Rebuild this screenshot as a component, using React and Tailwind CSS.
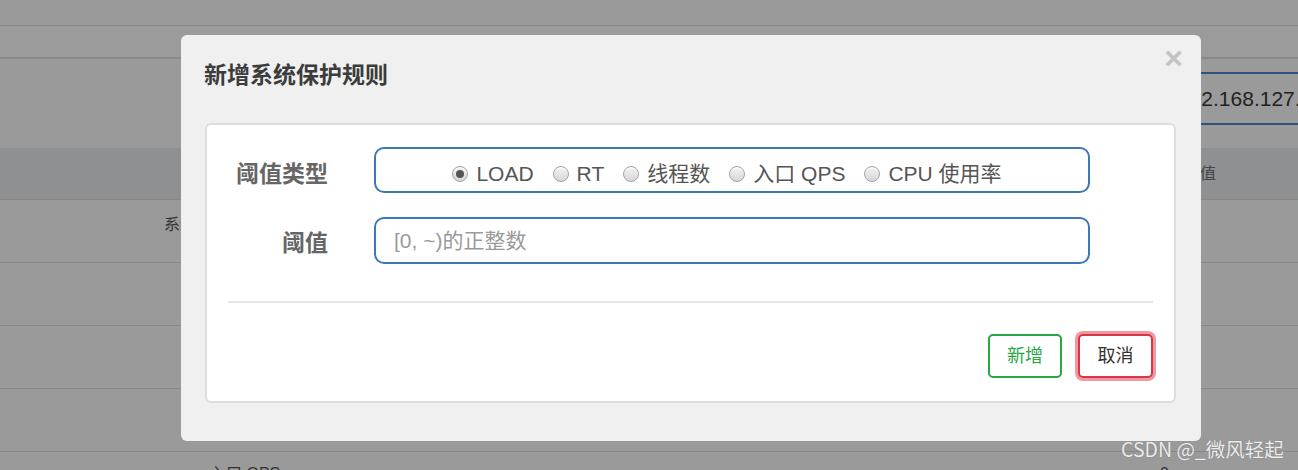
import React from "react";

const FONT = { fontFamily: '"Liberation Sans", "Noto Sans CJK SC", sans-serif' };

function Radio({ checked, label }) {
  return (
    <label className="flex items-center">
      <span className="relative w-[16px] h-[16px] rounded-full border border-[#a3a3a3] bg-linear-to-b from-[#f4f4f4] to-[#d6d6d6] flex items-center justify-center shadow-[inset_0_1px_1px_rgba(255,255,255,0.8)]">
        {checked && <span className="w-[8px] h-[8px] rounded-full bg-[#555555]" />}
      </span>
      <span className="ml-[8px] text-[21px] leading-[24px] text-[#555555]">{label}</span>
    </label>
  );
}

export default function App() {
  return (
    <div className="relative w-full h-[470px] overflow-hidden bg-[#9a9a9a]" style={FONT}>
      {/* background page (dimmed) */}
      <div className="h-[26px] border-b border-[#8a8a8a]" />
      <div className="h-[33px] border-b-2 border-[#898989] bg-[#9b9b9b]" />
      <div className="h-[89px] pt-[13px] pl-[1165px]">
        <div className="w-[400px] h-[53px] border-y-2 border-l-2 border-[#2f5479] rounded-l-[6px] flex items-center pl-[11px] text-[21px] text-[#222222]">
          192.168.127.1
        </div>
      </div>
      <div className="h-[52px] bg-[#8f9092] border-b border-[#888888] flex items-center pl-[1184px] text-[16px] text-[#444444]">
        阈值
      </div>
      <div className="h-[63px] border-b border-[#888888] pt-[15px] pl-[164px] text-[16px] leading-[20px] text-[#333333]">
        系统负载
      </div>
      <div className="h-[63px] border-b border-[#888888]" />
      <div className="h-[63px] border-b border-[#888888]" />
      <div className="h-[63px] border-b border-[#888888]" />
      <div className="flex pt-[12px] text-[16px] leading-[20px] text-[#333333]">
        <span className="w-[1160px] pl-[210px]">入口 QPS</span>
        <span>0</span>
      </div>

      {/* modal */}
      <div className="absolute left-[181px] top-[35px] w-[1020px] h-[406px] bg-[#f0f0f0] rounded-[6px]">
        <span className="absolute right-[18px] top-[3px] text-[32px] leading-[40px] font-bold text-[#c4c4c4]">×</span>
        <div className="h-[88px] pl-[23px] pt-[25px]">
          <h2 className="text-[23px] leading-[30px] font-bold text-[#3c3c3c]">新增系统保护规则</h2>
        </div>
        <div className="ml-[24px] w-[971px] h-[280px] bg-white border-2 border-[#dddddd] rounded-[6px] px-[21px] pt-[22px]">
          <div className="flex items-center h-[46px]">
            <div className="w-[100px] text-right text-[23px] font-bold text-[#666666] pt-[8px]">阈值类型</div>
            <div className="ml-[46px] w-[716px] h-[46px] border-2 border-[#3d78b6] rounded-[10px] flex items-center justify-center gap-[19px] pt-[8px] pr-[10px]">
              <Radio checked label="LOAD" />
              <Radio label="RT" />
              <Radio label="线程数" />
              <Radio label="入口 QPS" />
              <Radio label="CPU 使用率" />
            </div>
          </div>
          <div className="flex items-center h-[47px] mt-[24px]">
            <div className="w-[100px] text-right text-[23px] font-bold text-[#666666] pt-[6px]">阈值</div>
            <div className="ml-[46px] w-[716px] h-[47px] border-2 border-[#3d78b6] rounded-[10px] flex items-center pl-[18px] text-[21px] text-[#9a9a9a]">
              [0, ~)的正整数
            </div>
          </div>
          <div className="mt-[37px] h-[2px] bg-[#e6e6e6]" />
          <div className="mt-[31px] flex justify-end gap-[16px]">
            <button className="w-[74px] h-[44px] border-2 border-[#28a745] rounded-[5px] text-[18px] text-[#28a745] bg-white">新增</button>
            <button className="w-[75px] h-[44px] border-2 border-[#dc3545] rounded-[5px] text-[18px] text-[#333333] bg-white shadow-[0_0_0_3px_rgba(220,53,69,0.5)]">取消</button>
          </div>
        </div>
      </div>

      {/* watermark */}
      <div className="absolute left-[1121px] top-[436px] text-[19.5px] leading-[26px] text-[#ececec] [text-shadow:0_0_1px_#6f6f6f]" style={{ fontFamily: '"Noto Sans CJK SC", sans-serif' }}>
        CSDN @_微风轻起
      </div>
    </div>
  );
}
